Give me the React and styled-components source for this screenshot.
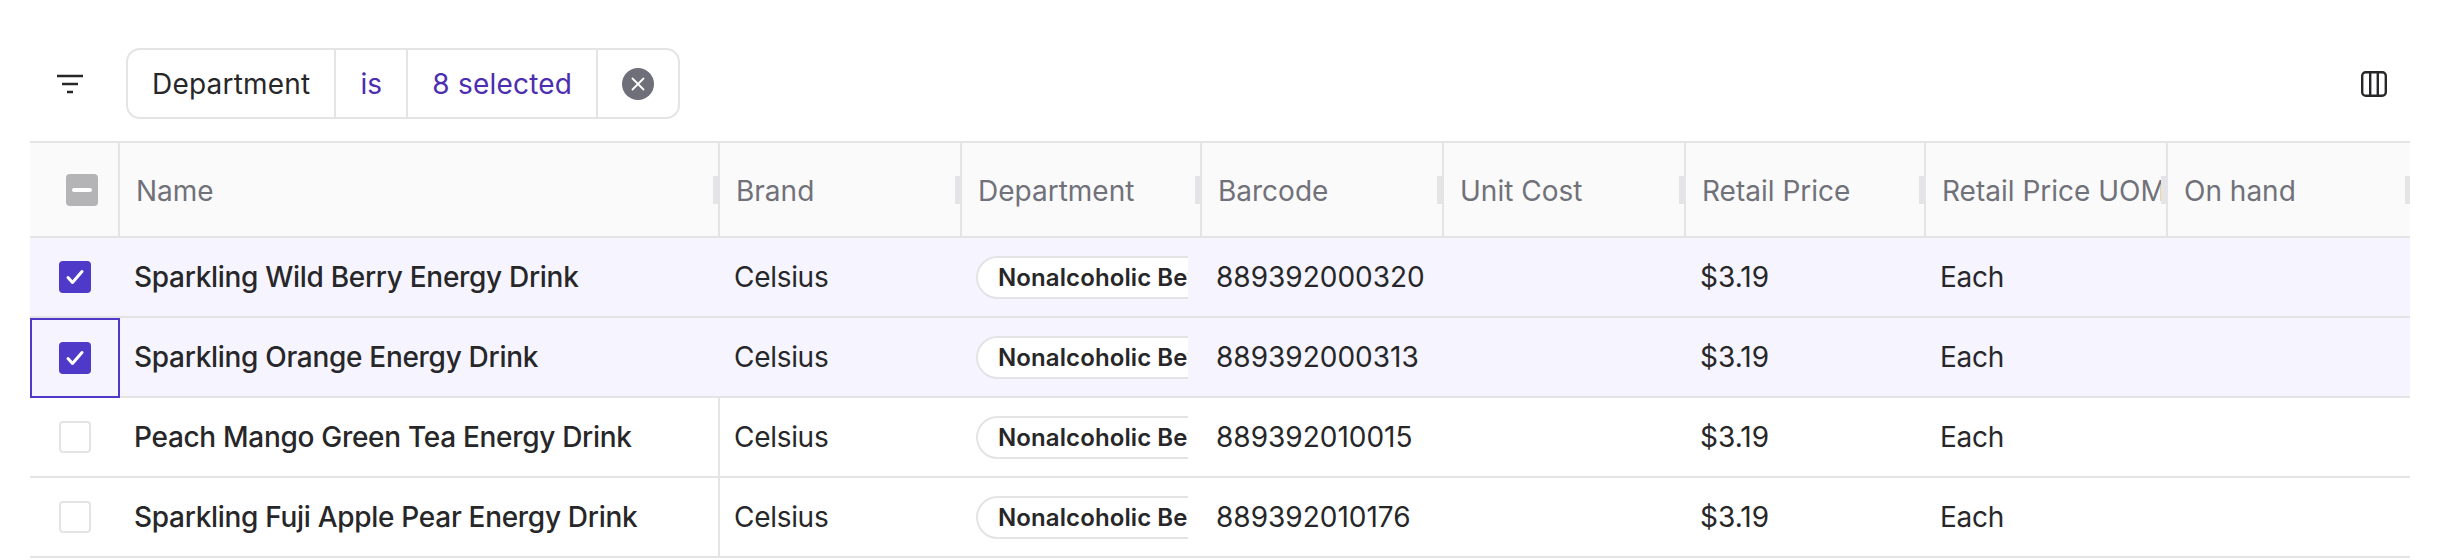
import React from 'react';
import styled, { createGlobalStyle, css } from 'styled-components';

const GlobalStyle = createGlobalStyle`
  html, body {
    margin: 0;
    background: #fff;
    font-family: Inter, 'Liberation Sans', sans-serif;
    color: #27272a;
  }
`;

const COLUMNS = '90px 600px 242px 240px 242px 242px 240px 242px 242px';

const Page = styled.div`
  width: 2448px;
  height: 560px;
  overflow: hidden;
`;

const Toolbar = styled.div`
  display: flex;
  align-items: center;
  height: 141px;
  box-sizing: border-box;
  padding: 48px 61px 22px 56px;
`;

const IconSlot = styled.span`
  display: flex;
  color: #27272a;
`;

const FilterPill = styled.div`
  display: flex;
  align-items: stretch;
  height: 71px;
  box-sizing: border-box;
  margin-left: 42px;
  border: 2px solid #e4e4e7;
  border-radius: 14px;
  font-size: 28px;
  letter-spacing: 0.2px;
`;

const PillSegment = styled.div`
  display: flex;
  align-items: center;
  padding: 0 ${(p) => p.$pad}px;
  color: ${(p) => (p.$accent ? '#4c2eb0' : '#27272a')};
  & + & {
    border-left: 2px solid #e4e4e7;
  }
`;

const Spacer = styled.div`
  flex: 1;
`;

const Table = styled.div`
  width: 2380px;
  margin-left: 30px;
  border-top: 2px solid #e4e4e7;
`;

const HeaderRow = styled.div`
  display: grid;
  grid-template-columns: ${COLUMNS};
  height: 95px;
  box-sizing: border-box;
  background: #fafafa;
  border-bottom: 2px solid #e4e4e7;
`;

const HeaderCell = styled.div`
  position: relative;
  display: flex;
  align-items: center;
  box-sizing: border-box;
  min-width: 0;
  padding: 3px 0 0 16px;
  border-right: 2px solid #e4e4e7;
  font-size: 28px;
  color: #71717a;
  white-space: nowrap;
  overflow: hidden;
  &:last-child {
    border-right: none;
  }
`;

const Resizer = styled.span`
  position: absolute;
  right: 0;
  top: 33px;
  width: 5px;
  height: 28px;
  background: #e4e4e7;
`;

const CheckHeaderCell = styled(HeaderCell)`
  padding: 0 0 0 36px;
`;

const Row = styled.div`
  display: grid;
  grid-template-columns: ${COLUMNS};
  height: 80px;
  box-sizing: border-box;
  border-bottom: 2px solid #e4e4e7;
  background: ${(p) => (p.$selected ? '#f6f5ff' : '#fff')};
`;

const Cell = styled.div`
  display: flex;
  align-items: center;
  box-sizing: border-box;
  min-width: 0;
  padding-left: 14px;
  font-size: 28px;
  letter-spacing: ${(p) => (p.$numeric ? '0' : '-0.3px')};
  white-space: nowrap;
`;

const NameCell = styled(Cell)`
  font-weight: 500;
  border-right: 2px solid ${(p) => (p.$selected ? 'transparent' : '#e4e4e7')};
`;

const CheckCell = styled(Cell)`
  padding-left: 29px;
  margin-bottom: ${(p) => (p.$focused ? '-2px' : '0')};
  outline: ${(p) => (p.$focused ? '2px solid #4f39c9' : 'none')};
  outline-offset: -2px;
`;

const Checkbox = styled.span`
  display: flex;
  align-items: center;
  justify-content: center;
  width: 32px;
  height: 32px;
  box-sizing: border-box;
  border-radius: 4px;
  ${(p) =>
    p.$state === 'checked' &&
    css`
      background: #4f39c9;
    `}
  ${(p) =>
    p.$state === 'mixed' &&
    css`
      background: #b4b4b6;
    `}
  ${(p) =>
    p.$state === 'empty' &&
    css`
      background: #fff;
      border: 2px solid #e4e4e7;
    `}
`;

const ChipCell = styled(Cell)`
  padding-right: 14px;
  letter-spacing: 0.1px;
`;

const ChipClip = styled.div`
  width: 100%;
  overflow: hidden;
`;

const Chip = styled.span`
  display: inline-flex;
  align-items: center;
  height: 43px;
  box-sizing: border-box;
  padding: 0 20px;
  background: #fff;
  border: 2px solid #e4e4e7;
  border-radius: 22px;
  font-size: 24px;
  font-weight: 600;
  color: #27272a;
`;

const FilterIcon = () => (
  <svg width="28" height="20" viewBox="0 0 28 20" fill="none" stroke="currentColor" strokeWidth="2.6">
    <path d="M1 2h26M6 10h16M11 18h6" />
  </svg>
);

const ClearIcon = () => (
  <svg width="32" height="32" viewBox="0 0 32 32" fill="none">
    <circle cx="16" cy="16" r="16" fill="#6f6f7a" />
    <path d="M10.5 10.5l11 11M21.5 10.5l-11 11" stroke="#fff" strokeWidth="1.8" strokeLinecap="round" />
  </svg>
);

const ColumnsIcon = () => (
  <svg width="26" height="26" viewBox="0 0 26 26" fill="none" stroke="currentColor" strokeWidth="2.4">
    <rect x="1.2" y="1.2" width="23.6" height="23.6" rx="3.5" />
    <path d="M9.2 1.2v23.6M16.8 1.2v23.6" />
  </svg>
);

const CheckMark = () => (
  <svg width="24" height="24" viewBox="0 0 24 24" fill="none" stroke="#fff" strokeWidth="3" strokeLinecap="round" strokeLinejoin="round">
    <path d="M5 12.5l4.5 5 9.5-11" />
  </svg>
);

const MinusMark = () => (
  <svg width="20" height="6" viewBox="0 0 20 6" fill="none" stroke="#fff" strokeWidth="4" strokeLinecap="round">
    <path d="M2 3h16" />
  </svg>
);

const headers = ['Name', 'Brand', 'Department', 'Barcode', 'Unit Cost', 'Retail Price', 'Retail Price UOM', 'On hand'];

const products = [
  { name: 'Sparkling Wild Berry Energy Drink', barcode: '889392000320', selected: true },
  { name: 'Sparkling Orange Energy Drink', barcode: '889392000313', selected: true, focused: true },
  { name: 'Peach Mango Green Tea Energy Drink', barcode: '889392010015' },
  { name: 'Sparkling Fuji Apple Pear Energy Drink', barcode: '889392010176' },
];

const App = () => (
  <Page>
    <GlobalStyle />
    <Toolbar>
      <IconSlot>
        <FilterIcon />
      </IconSlot>
      <FilterPill>
        <PillSegment $pad={24}>Department</PillSegment>
        <PillSegment $pad={24} $accent>is</PillSegment>
        <PillSegment $pad={24} $accent>8 selected</PillSegment>
        <PillSegment $pad={24}>
          <ClearIcon />
        </PillSegment>
      </FilterPill>
      <Spacer />
      <IconSlot>
        <ColumnsIcon />
      </IconSlot>
    </Toolbar>
    <Table>
      <HeaderRow>
        <CheckHeaderCell>
          <Checkbox $state="mixed">
            <MinusMark />
          </Checkbox>
        </CheckHeaderCell>
        {headers.map((label) => (
          <HeaderCell key={label}>
            {label}
            <Resizer />
          </HeaderCell>
        ))}
      </HeaderRow>
      {products.map((item) => (
        <Row key={item.barcode} $selected={item.selected}>
          <CheckCell $focused={item.focused}>
            <Checkbox $state={item.selected ? 'checked' : 'empty'}>
              {item.selected && <CheckMark />}
            </Checkbox>
          </CheckCell>
          <NameCell $selected={item.selected}>{item.name}</NameCell>
          <Cell>Celsius</Cell>
          <ChipCell>
            <ChipClip>
              <Chip>Nonalcoholic Beverages</Chip>
            </ChipClip>
          </ChipCell>
          <Cell $numeric>{item.barcode}</Cell>
          <Cell />
          <Cell $numeric>$3.19</Cell>
          <Cell>Each</Cell>
          <Cell />
        </Row>
      ))}
    </Table>
  </Page>
);

export default App;
